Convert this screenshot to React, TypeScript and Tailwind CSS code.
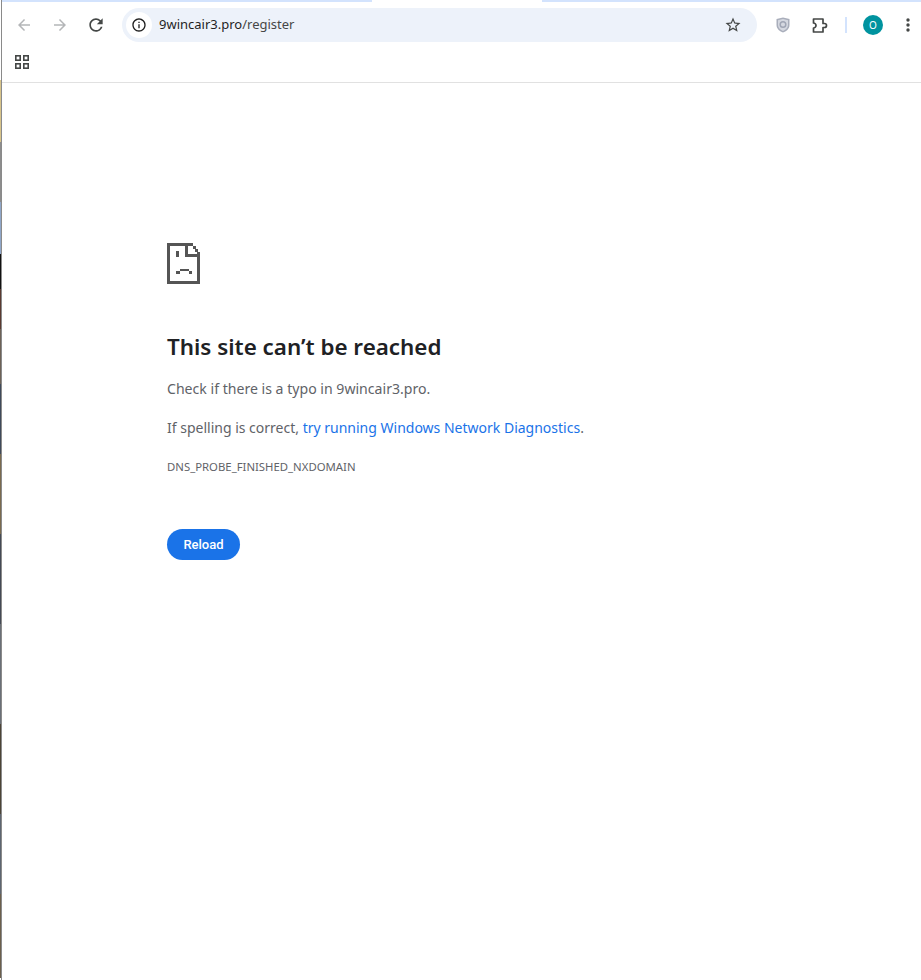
import React from 'react';

// noisy strip of the window behind, down the left edge of the browser
const edgeStrips = [
  { h: 62, c: '#d8c48a' },
  { h: 60, c: '#8d8d8d' },
  { h: 52, c: '#8fa6c8' },
  { h: 35, c: '#111111' },
  { h: 40, c: '#5a3a30' },
  { h: 55, c: '#6d6257' },
  { h: 70, c: '#3f4a5a' },
  { h: 80, c: '#7a6a4e' },
  { h: 90, c: '#444a55' },
  { h: 100, c: '#6a6f76' },
  { h: 90, c: '#4c4436' },
  { h: 80, c: '#5d6570' },
  { h: 84, c: '#6b5f4c' },
];

const Glyph = ({ d, size, color }: { d: string; size: number; color: string }) => (
  <svg width={size} height={size} viewBox="0 0 24 24" fill={color} className="shrink-0">
    <path d={d} />
  </svg>
);

// sad page icon, drawn on its 3px pixel grid
const SadPage = () => (
  <svg width="33" height="41" viewBox="0 0 33 41" fill="#555555" shapeRendering="crispEdges" className="block">
    <rect x="0" y="0" width="26" height="3" />
    <rect x="0" y="0" width="3" height="41" />
    <rect x="0" y="38" width="33" height="3" />
    <rect x="30" y="9" width="3" height="32" />
    <rect x="18" y="0" width="3" height="14" />
    <rect x="18" y="11" width="15" height="3" />
    <rect x="26" y="3" width="3" height="3" />
    <rect x="28" y="6" width="3" height="3" />
    <rect x="9" y="8" width="3" height="6" />
    <rect x="13" y="26" width="9" height="2" />
    <rect x="9" y="28" width="4" height="3" />
    <rect x="22" y="28" width="3" height="3" />
  </svg>
);

const AppsIcon = () => (
  <svg width="14" height="14" viewBox="0 0 14 14" fill="none" stroke="#444746" strokeWidth="1.6" className="block">
    <rect x="0.8" y="0.8" width="4.4" height="4.4" />
    <rect x="8.8" y="0.8" width="4.4" height="4.4" />
    <rect x="0.8" y="8.8" width="4.4" height="4.4" />
    <rect x="8.8" y="8.8" width="4.4" height="4.4" />
  </svg>
);

const ShieldIcon = () => (
  <svg width="14" height="16" viewBox="0 0 14 16" className="shrink-0">
    <path d="M7 0.5 L13.5 2 V8 C13.5 12 10 14.5 7 15.5 C4 14.5 0.5 12 0.5 8 V2 Z" fill="#a9aebb" />
    <path d="M7 2 L12 3.2 V8 C12 11 9.5 13 7 14 C4.5 13 2 11 2 8 V3.2 Z" fill="#d5d8e0" />
    <circle cx="7" cy="7.5" r="2.8" fill="none" stroke="#a0a6b5" strokeWidth="1.5" />
  </svg>
);

const PuzzleIcon = () => (
  <svg width="17" height="15" viewBox="0 0 17 15" fill="none" stroke="#444746" strokeWidth="1.7" className="shrink-0">
    <path d="M1.5 1 H11 V5.5 H12.5 a2 2 0 0 1 0 4 H11 V14 H1.5 V10 a2.5 2.5 0 0 0 0 -5 Z" strokeLinejoin="round" />
  </svg>
);

const DotsIcon = () => (
  <svg width="4" height="14" viewBox="0 0 4 14" fill="#444746" className="shrink-0">
    <circle cx="2" cy="2" r="1.7" />
    <circle cx="2" cy="7" r="1.7" />
    <circle cx="2" cy="12" r="1.7" />
  </svg>
);

export default function App() {
  return (
    <div className="flex min-h-[980px] bg-white font-['Noto_Sans','Open_Sans',sans-serif]">
      <div className="w-[2px] shrink-0 flex flex-col border-r border-[#8a8a8a]">
        <div className="h-[80px] shrink-0" />
        {edgeStrips.map((s, i) => (
          <div key={i} className="shrink-0" style={{ height: s.h, backgroundColor: s.c }} />
        ))}
      </div>
      <div className="flex-1 min-w-0">
        <div className="flex h-[2px]">
          <div className="w-[370px] bg-[#d3e3fd]" />
          <div className="w-[170px]" />
          <div className="flex-1 bg-[#d3e3fd]" />
        </div>
        <header className="h-[81px] border-b border-[#e1e1e1] pt-[6px]">
          <div className="flex h-[34px] items-center pl-[13px] pr-[5px]">
            <Glyph size={18} color="#b4b6b8" d="M20 11H7.83l5.59-5.59L12 4l-8 8 8 8 1.41-1.41L7.83 13H20v-2z" />
            <div className="w-[18px]" />
            <Glyph size={18} color="#b4b6b8" d="M12 4l-1.41 1.41L16.17 11H4v2h12.17l-5.58 5.59L12 20l8-8z" />
            <div className="w-[17px]" />
            <Glyph size={20} color="#444746" d="M17.65 6.35A7.958 7.958 0 0 0 12 4c-4.42 0-7.99 3.58-7.99 8s3.57 8 7.99 8c3.73 0 6.84-2.55 7.73-6h-2.08A5.99 5.99 0 0 1 12 18c-3.31 0-6-2.69-6-6s2.69-6 6-6c1.66 0 3.14.69 4.22 1.78L13 11h7V4l-2.35 2.35z" />
            <div className="flex w-[635px] h-[34px] ml-[16px] items-center rounded-full bg-[#edf2fa] pl-[4px] pr-[15px]">
              <div className="flex w-[26px] h-[26px] items-center justify-center rounded-full bg-white">
                <Glyph size={16} color="#1f1f1f" d="M11 7h2v2h-2zm0 4h2v6h-2zm1-9C6.48 2 2 6.48 2 12s4.48 10 10 10 10-4.48 10-10S17.52 2 12 2zm0 18c-4.41 0-8-3.59-8-8s3.59-8 8-8 8 3.59 8 8-3.59 8-8 8z" />
              </div>
              <span className="ml-[7px] text-[13px] text-[#1f1f1f]">
                9wincair3.pro<span className="text-[#474747]">/register</span>
              </span>
              <div className="ml-auto">
                <Glyph size={18} color="#444746" d="M22 9.24l-7.19-.62L12 2 9.19 8.63 2 9.24l5.46 4.73L5.82 21 12 17.27 18.18 21l-1.63-7.03L22 9.24zM12 15.4l-3.76 2.27 1-4.28-3.32-2.88 4.38-.38L12 6.1l1.71 4.04 4.38.38-3.32 2.88 1 4.28L12 15.4z" />
              </div>
            </div>
            <div className="ml-[19px]"><ShieldIcon /></div>
            <div className="ml-[22px]"><PuzzleIcon /></div>
            <div className="w-[2px] h-4 ml-[16px] bg-[#d3e3fd]" />
            <div className="flex w-5 h-5 ml-[16px] items-center justify-center rounded-full bg-[#00939f] text-[10px] text-white">O</div>
            <div className="ml-[23px]"><DotsIcon /></div>
          </div>
          <div className="mt-[13px] ml-[13px]"><AppsIcon /></div>
        </header>
        <main className="pl-[165px] pt-[160px]">
          <SadPage />
          <h1 className="mt-[46px] text-[22.4px] leading-[34px] font-semibold text-[#202124]">This site can’t be reached</h1>
          <p className="mt-[12px] text-[14.1px] leading-[26px] text-[#5f6368]">Check if there is a typo in 9wincair3.pro.</p>
          <p className="mt-[13px] text-[14px] leading-[26px] text-[#5f6368]">
            If spelling is correct, <span className="text-[#1a73e8]">try running Windows Network Diagnostics</span>.
          </p>
          <p className="mt-[18px] text-[11.35px] leading-[16px] text-[#5f6368]">DNS_PROBE_FINISHED_NXDOMAIN</p>
          <button className="mt-[54px] h-[31px] w-[73px] rounded-full bg-[#1a73e8] text-[13px] font-medium text-white font-['Roboto',sans-serif]">Reload</button>
        </main>
      </div>
    </div>
  );
}
